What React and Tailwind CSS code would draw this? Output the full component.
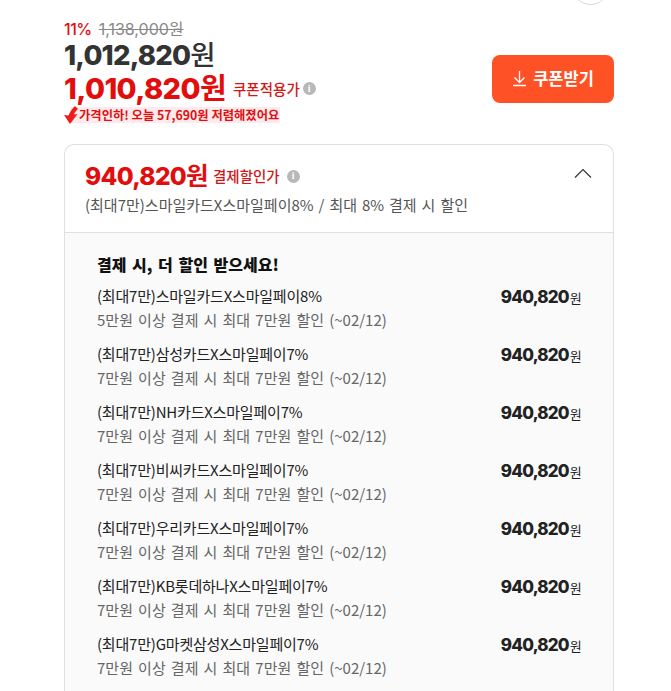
const KR = "font-['Noto_Sans_CJK_KR',sans-serif]";
const NUM = "font-['Inter','Noto_Sans_CJK_KR',sans-serif]";

const offers = [
  ["(최대7만)스마일카드X스마일페이8%", "5만원 이상 결제 시 최대 7만원 할인 (~02/12)"],
  ["(최대7만)삼성카드X스마일페이7%", "7만원 이상 결제 시 최대 7만원 할인 (~02/12)"],
  ["(최대7만)NH카드X스마일페이7%", "7만원 이상 결제 시 최대 7만원 할인 (~02/12)"],
  ["(최대7만)비씨카드X스마일페이7%", "7만원 이상 결제 시 최대 7만원 할인 (~02/12)"],
  ["(최대7만)우리카드X스마일페이7%", "7만원 이상 결제 시 최대 7만원 할인 (~02/12)"],
  ["(최대7만)KB롯데하나X스마일페이7%", "7만원 이상 결제 시 최대 7만원 할인 (~02/12)"],
  ["(최대7만)G마켓삼성X스마일페이7%", "7만원 이상 결제 시 최대 7만원 할인 (~02/12)"],
];

const InfoDot = () => (
  <span className="flex h-[13px] w-[13px] items-center justify-center rounded-full bg-[#b8b8b8] font-['Liberation_Serif',serif] text-[10px] font-bold leading-none text-white">
    i
  </span>
);

const Bolt = () => (
  <svg width="14" height="18" viewBox="0 0 14 18" className="relative shrink-0">
    <path d="M11 0 L14 3 C12 5 10.500 6.500 10 8.500 L13.500 8 L6 18 L0 9 L4.500 9.500 C6 6 8 3 11 0 Z" fill="#f01b1b" />
  </svg>
);

const DownloadIcon = () => (
  <svg width="15" height="17" viewBox="0 0 15 17" className="shrink-0">
    <path d="M7.500 1 V12 M2.500 7.500 L7.500 12.500 L12.500 7.500 M1 15.500 H14" fill="none" stroke="#fff" strokeWidth="1.3" />
  </svg>
);

const OfferRow = ({ title, desc }) => (
  <div className="flex h-[58px] items-start justify-between">
    <div>
      <p className="text-[15px] leading-[24px] tracking-[-0.2px] text-[#222]">{title}</p>
      <p className="text-[15px] leading-[24px] text-[#666] [word-spacing:1.8px]">{desc}</p>
    </div>
    <p className={`${NUM} flex items-baseline pt-[1px] text-[17px] font-extrabold leading-[24px] tracking-[-0.8px] text-[#222]`}>
      940,820
      <span className={`${KR} ml-[1px] text-[13px] font-normal`}>원</span>
    </p>
  </div>
);

export default function App() {
  return (
    <div className={`${KR} relative h-[691px] w-[671px] overflow-hidden bg-white`}>
      {/* top circle, cut off by the window */}
      <div className="absolute left-[572px] top-[-32px] h-[37px] w-[37px] rounded-full border border-[#d8d8d8]" />

      <div className="ml-[64px] w-[550px] pt-[19px]">
        <div className="flex items-center justify-between">
          <div>
            <div className="flex h-[20px] items-center gap-[7px]">
              <span className={`${NUM} text-[16px] font-medium tracking-[-0.5px] text-[#e01010]`}>11%</span>
              <span className={`${NUM} text-[16px] text-[#888] line-through`}>1,138,000원</span>
            </div>
            <p className={`${NUM} flex h-[32px] items-center text-[27.5px] font-extrabold leading-[32px] tracking-[-0.8px] text-[#333]`}>
              1,012,820<span className="font-medium">원</span>
            </p>
            <div className="mt-[1px] flex h-[33px] items-center">
              <span className={`${NUM} text-[29px] font-extrabold leading-[33px] tracking-[-0.6px] text-[#e20e0e]`}>
                1,010,820<span className="font-bold">원</span>
              </span>
              <span className="ml-[7px] text-[14.5px] font-medium text-[#d01818]">쿠폰적용가</span>
              <span className="ml-[3px]"><InfoDot /></span>
            </div>
            <div className="mt-[1px] flex h-[18px] items-center">
              <Bolt />
              <span className="ml-[-8px] bg-[#ffe9ec] pl-[9px] pr-[1px] text-[12.3px] font-bold leading-[16px] text-[#e01010]">
                가격인하! 오늘 57,690원 저렴해졌어요
              </span>
            </div>
          </div>

          <button className="mt-[14px] flex h-[48px] w-[122px] items-center justify-center gap-[6px] rounded-[8px] bg-[#ff5126] text-[16.5px] font-bold text-white">
            <DownloadIcon />
            쿠폰받기
          </button>
        </div>

        <div className="mt-[20px] rounded-t-[10px] border border-b-0 border-[#e0e0e0]">
          <div className="relative h-[87px] px-[20px] pt-[15px]">
            <div className="flex h-[32px] items-center">
              <span className={`${NUM} text-[24.5px] font-extrabold leading-[32px] tracking-[-0.7px] text-[#e20e0e]`}>
                940,820<span className="font-bold">원</span>
              </span>
              <span className="ml-[5px] text-[14.5px] font-medium text-[#d01818]">결제할인가</span>
              <span className="ml-[7px]"><InfoDot /></span>
            </div>
            <p className="mt-[1px] text-[15px] leading-[24px] text-[#555] [word-spacing:1.6px]">
              (최대7만)스마일카드X스마일페이8% / 최대 8% 결제 시 할인
            </p>
            <svg width="18" height="10" viewBox="0 0 18 10" className="absolute right-[21px] top-[23px]">
              <path d="M1 9.500 L9 1.500 L17 9.500" fill="none" stroke="#333" strokeWidth="1.2" />
            </svg>
          </div>

          <div className="h-[460px] border-t border-[#e0e0e0] bg-[#fafafa] pl-[32px] pr-[32px] pt-[19px]">
            <p className="text-[16px] font-black leading-[24px] text-[#111] [word-spacing:2px]">결제 시, 더 할인 받으세요!</p>
            <div className="mt-[8px]">
              {offers.map(([title, desc]) => (
                <OfferRow key={title} title={title} desc={desc} />
              ))}
            </div>
          </div>
        </div>
      </div>
    </div>
  );
}
